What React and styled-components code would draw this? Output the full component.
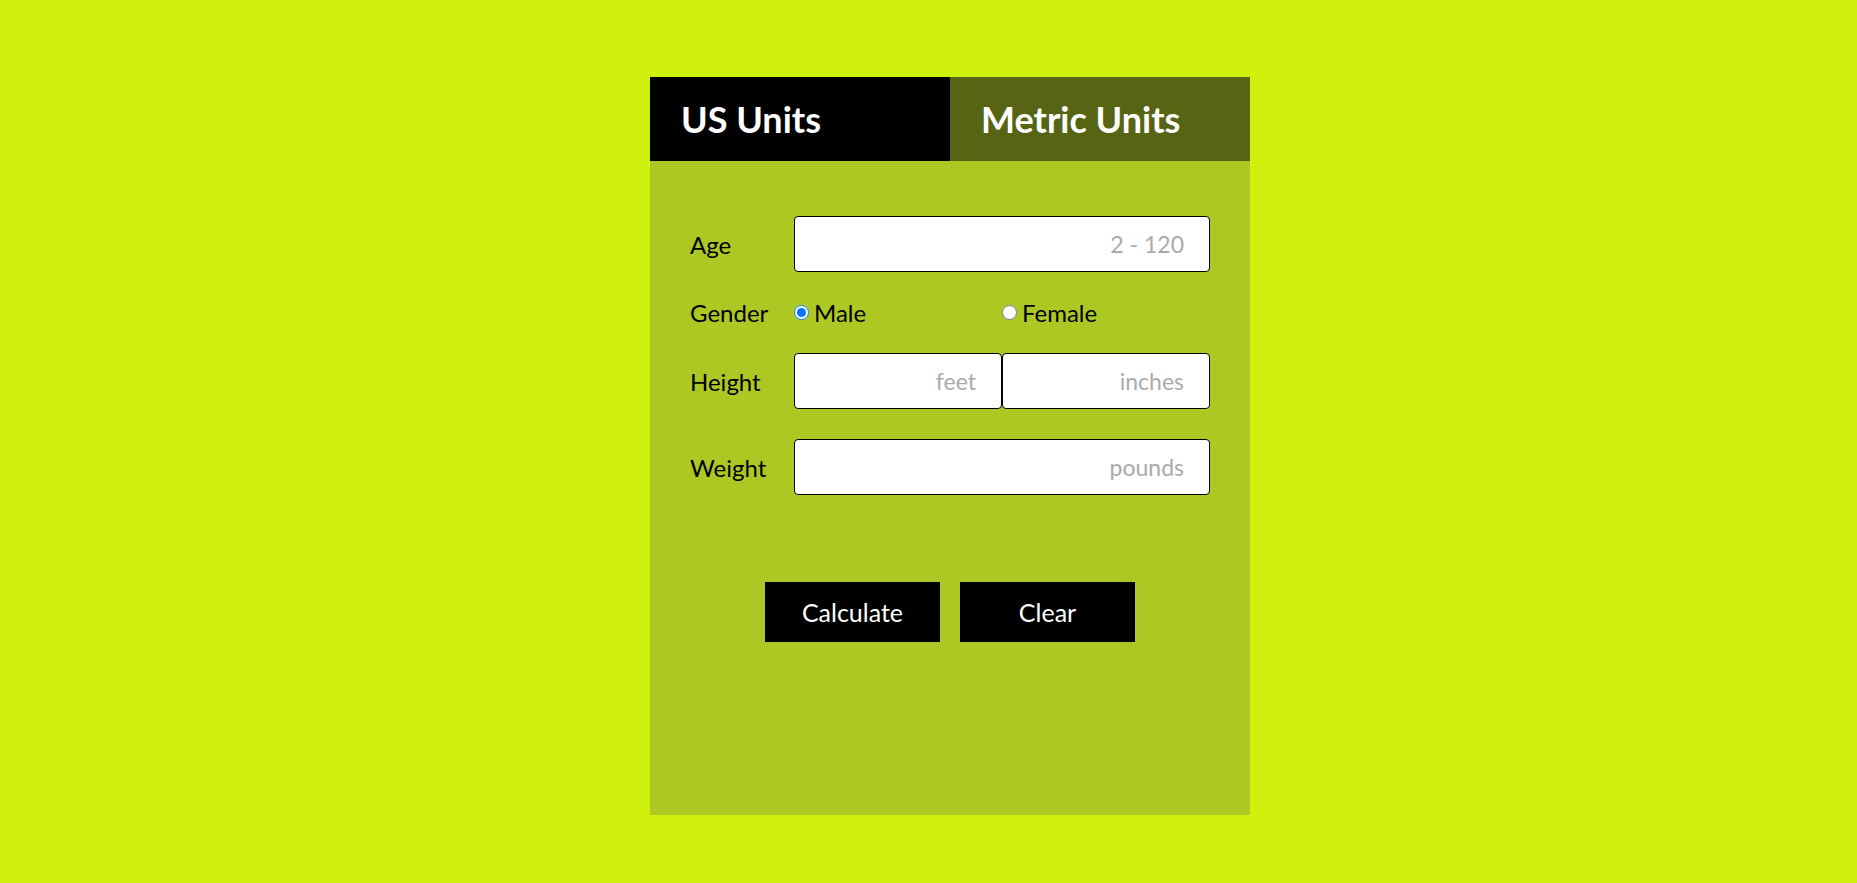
import React, { useState } from "react";
import styled, { createGlobalStyle } from "styled-components";

const GlobalStyle = createGlobalStyle`
  *, *::before, *::after { box-sizing: border-box; }
  body {
    margin: 0;
    background: #d0f00e;
    color: #000;
    font-family: Lato, "Liberation Sans", sans-serif;
    font-size: 24px;
    font-weight: 400;
  }
`;

const Page = styled.main`
  display: flex;
  justify-content: center;
  padding: 77px 40px 68px;
`;

const Card = styled.section`
  width: 100%;
  max-width: 600px;
  min-height: 738px;
  margin-left: 43px;
  background: #adc823;
`;

const Tabs = styled.div`
  display: grid;
  grid-template-columns: 1fr 1fr;
`;

const Tab = styled.button`
  height: 84px;
  padding: 0 31px;
  border: 0;
  background: ${({ $active }) => ($active ? "#000" : "#566414")};
  color: #fff;
  font: 700 36px/44px Lato, sans-serif;
  text-align: left;
  cursor: pointer;
`;

const Form = styled.form`
  padding: 55px 40px 0;
`;

const Row = styled.div`
  display: grid;
  grid-template-columns: 104px minmax(0, 1fr);
  align-items: center;
  margin-bottom: 30px;
`;

const Label = styled.label`
  line-height: 21px;
`;

const Fields = styled.div`
  display: flex;
`;

const Field = styled.input`
  flex: 1;
  min-width: 0;
  height: 56px;
  padding: 0 25px;
  border: 1px solid #000;
  border-radius: 4px;
  background: #fff;
  font: 400 23px/28px Lato, sans-serif;
  text-align: right;
  &::placeholder { color: #aaa; opacity: 1; }
`;

const Option = styled.label`
  flex: 1;
  display: flex;
  align-items: center;
  line-height: 21px;
`;

const Radio = styled.input`
  width: 15px;
  height: 15px;
  margin: 0 5px 0 0;
`;

const Actions = styled.div`
  display: flex;
  justify-content: center;
  gap: 20px;
  padding-top: 57px;
`;

const Button = styled.button`
  width: 175px;
  height: 60px;
  border: 0;
  background: #000;
  color: #fff;
  font: 400 25px/28px Lato, sans-serif;
  cursor: pointer;
`;

export default function App() {
  const [units, setUnits] = useState("us");
  const us = units === "us";
  return (
    <>
      <GlobalStyle />
      <Page>
        <Card>
          <Tabs>
            <Tab type="button" $active={us} onClick={() => setUnits("us")}>US Units</Tab>
            <Tab type="button" $active={!us} onClick={() => setUnits("metric")}>Metric Units</Tab>
          </Tabs>
          <Form onSubmit={(e) => e.preventDefault()}>
            <Row>
              <Label htmlFor="age">Age</Label>
              <Fields><Field id="age" placeholder="2 - 120" /></Fields>
            </Row>
            <Row role="radiogroup" aria-labelledby="gender">
              <Label as="span" id="gender">Gender</Label>
              <Fields>
                <Option><Radio type="radio" name="gender" value="male" defaultChecked />Male</Option>
                <Option><Radio type="radio" name="gender" value="female" />Female</Option>
              </Fields>
            </Row>
            <Row>
              <Label htmlFor="height">Height</Label>
              <Fields>
                <Field id="height" placeholder={us ? "feet" : "cm"} />
                {us && <Field aria-label="Height, inches" placeholder="inches" />}
              </Fields>
            </Row>
            <Row>
              <Label htmlFor="weight">Weight</Label>
              <Fields><Field id="weight" placeholder={us ? "pounds" : "kg"} /></Fields>
            </Row>
            <Actions>
              <Button type="submit">Calculate</Button>
              <Button type="reset">Clear</Button>
            </Actions>
          </Form>
        </Card>
      </Page>
    </>
  );
}
